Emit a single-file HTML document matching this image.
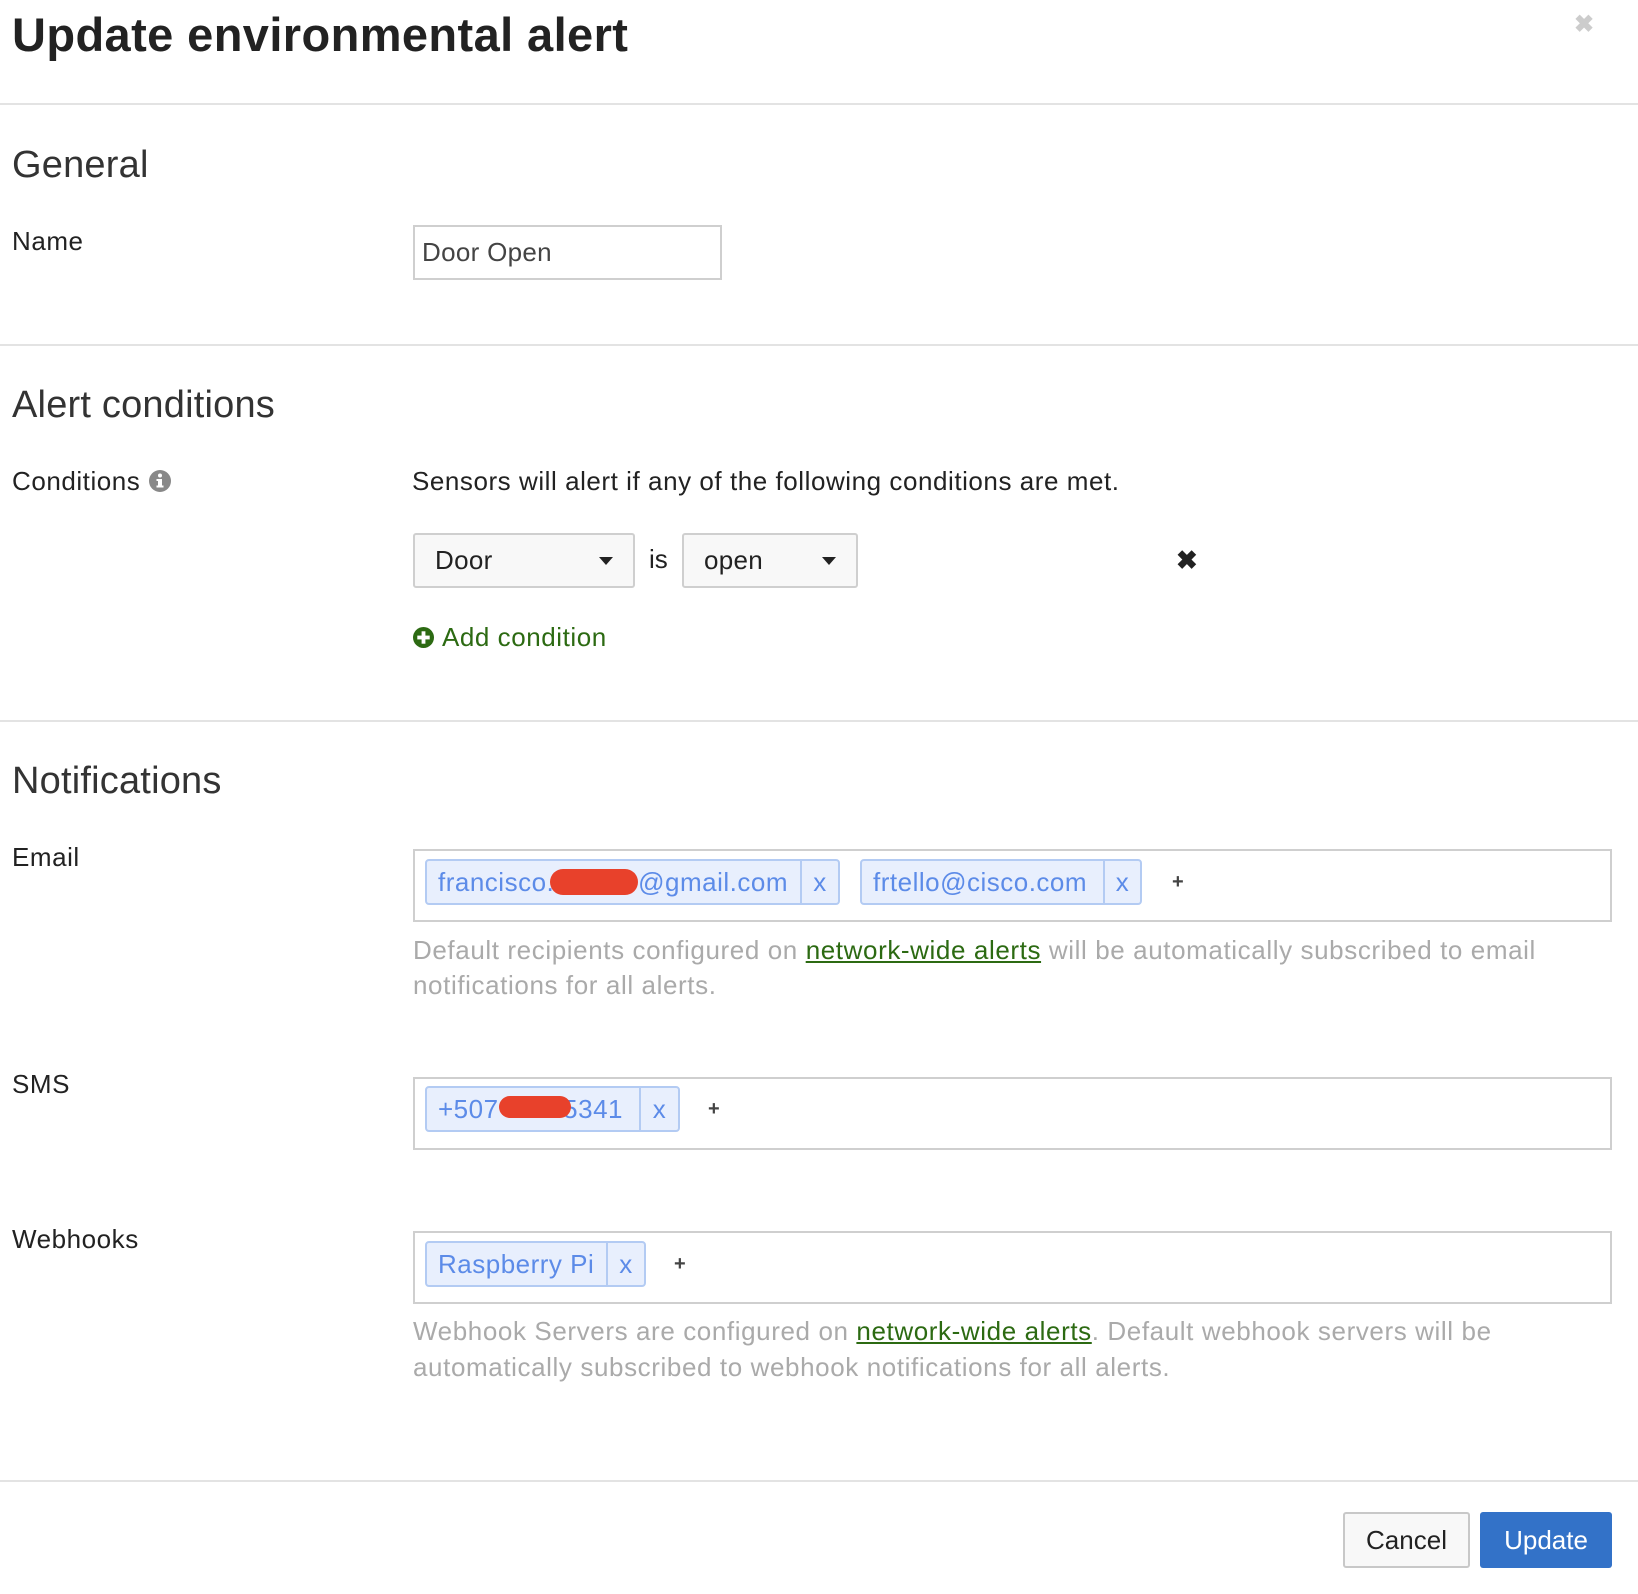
<!DOCTYPE html>
<html><head><meta charset="utf-8"><style>
*{margin:0;padding:0;box-sizing:border-box}
body{width:1638px;height:1594px;background:#fff;font-family:"Liberation Sans",Arial,sans-serif;color:#222;position:relative;overflow:hidden}
.a{position:absolute;white-space:nowrap}
.hr{position:absolute;left:0;width:1638px;height:2px;background:#e3e3e3}
.h2{font-size:38px;color:#333;line-height:44px;letter-spacing:0.2px}
.lbl{font-size:26px;line-height:30px;letter-spacing:0.55px}
.box{position:absolute;border:2px solid #cfcfcf;background:#fff}
.sel{position:absolute;border:2px solid #cfcfcf;border-radius:3px;background:#f8f8f8;font-size:26px;line-height:50px;padding-left:20px;letter-spacing:0.3px}
.sel:after{content:"";position:absolute;right:20px;top:22px;border-left:7px solid transparent;border-right:7px solid transparent;border-top:8px solid #222}
.tag{position:absolute;height:46px;border:2px solid #b3cbf3;border-radius:4px;background:#e8effd;color:#5c8be8;font-size:26px;line-height:42px;letter-spacing:0.5px}
.tag .t{position:absolute;left:11px;top:0}
.tag .x{position:absolute;top:0;bottom:0;border-left:2px solid #b3cbf3;text-align:center}
.plus{position:absolute;font-size:20px;color:#444;font-weight:bold}
.help{font-size:26px;line-height:36px;color:#aaa;letter-spacing:0.6px}
.help a{color:#2c6a12;text-decoration:underline}
.blob{position:absolute;background:#e8412b;border-radius:14px}
</style></head><body>
<div class="a" style="left:12px;top:7px;font-size:47px;font-weight:bold;line-height:56px;color:#222;letter-spacing:0.4px">Update environmental alert</div>
<div class="a" style="left:1574px;top:10px;font-size:24px;color:#ccc;font-weight:bold">✖</div>
<div class="hr" style="top:103px"></div>

<div class="a h2" style="left:12px;top:143px">General</div>
<div class="a lbl" style="left:12px;top:226px">Name</div>
<div class="box" style="left:413px;top:225px;width:309px;height:55px"></div>
<div class="a" style="left:422px;top:237px;font-size:26px;line-height:30px;color:#444;letter-spacing:0.3px">Door Open</div>
<div class="hr" style="top:344px"></div>

<div class="a h2" style="left:12px;top:383px">Alert conditions</div>
<div class="a lbl" style="left:12px;top:466px">Conditions</div>
<svg class="a" style="left:149px;top:470px" width="22" height="22" viewBox="0 0 22 22"><circle cx="11" cy="11" r="11" fill="#888"/><rect x="9" y="9" width="4" height="8" fill="#fff"/><rect x="7.5" y="15.5" width="7" height="2" fill="#fff"/><rect x="7.5" y="9" width="3" height="2" fill="#fff"/><circle cx="11" cy="5.5" r="2" fill="#fff"/></svg>
<div class="a lbl" style="left:412px;top:466px">Sensors will alert if any of the following conditions are met.</div>
<div class="sel" style="left:413px;top:533px;width:222px;height:55px">Door</div>
<div class="a" style="left:649px;top:544px;font-size:26px;line-height:30px">is</div>
<div class="sel" style="left:682px;top:533px;width:176px;height:55px">open</div>
<div class="a" style="left:1176px;top:545px;font-size:26px;font-weight:bold;color:#222">✖</div>
<svg class="a" style="left:413px;top:627px" width="21" height="21" viewBox="0 0 22 22"><circle cx="11" cy="11" r="11" fill="#2c6a12"/><rect x="9" y="4.5" width="4" height="13" fill="#fff"/><rect x="4.5" y="9" width="13" height="4" fill="#fff"/></svg>
<div class="a lbl" style="left:442px;top:622px;color:#2c6a12">Add condition</div>
<div class="hr" style="top:720px"></div>

<div class="a h2" style="left:12px;top:759px">Notifications</div>
<div class="a lbl" style="left:12px;top:842px">Email</div>
<div class="box" style="left:413px;top:849px;width:1199px;height:73px"></div>
<div class="tag" style="left:425px;top:859px;width:415px"><span class="t">francisco.</span><span class="t" style="left:auto;right:50px">@gmail.com</span><span class="x" style="left:373px;width:38px">x</span></div>
<div class="blob" style="left:550px;top:869px;width:88px;height:26px"></div>
<div class="tag" style="left:860px;top:859px;width:282px"><span class="t">frtello@cisco.com</span><span class="x" style="left:241px;width:37px">x</span></div>
<div class="plus" style="left:1172px;top:871px">+</div>
<div class="a help" style="left:413px;top:932px">Default recipients configured on <a>network-wide alerts</a> will be automatically subscribed to email</div>
<div class="a help" style="left:413px;top:967px">notifications for all alerts.</div>

<div class="a lbl" style="left:12px;top:1069px">SMS</div>
<div class="box" style="left:413px;top:1077px;width:1199px;height:73px"></div>
<div class="tag" style="left:425px;top:1086px;width:255px"><span class="t">+507</span><span class="t" style="left:auto;right:55px">5341</span><span class="x" style="left:212px;width:39px">x</span></div>
<div class="blob" style="left:499px;top:1096px;width:72px;height:22px"></div>
<div class="plus" style="left:708px;top:1098px">+</div>

<div class="a lbl" style="left:12px;top:1224px">Webhooks</div>
<div class="box" style="left:413px;top:1231px;width:1199px;height:73px"></div>
<div class="tag" style="left:425px;top:1241px;width:221px"><span class="t">Raspberry Pi</span><span class="x" style="left:179px;width:38px">x</span></div>
<div class="plus" style="left:674px;top:1253px">+</div>
<div class="a help" style="left:413px;top:1313px">Webhook Servers are configured on <a>network-wide alerts</a>. Default webhook servers will be</div>
<div class="a help" style="left:413px;top:1349px">automatically subscribed to webhook notifications for all alerts.</div>

<div class="hr" style="top:1480px"></div>
<div class="a" style="left:1343px;top:1512px;width:127px;height:56px;border:2px solid #c8c8c8;border-radius:3px;background:#f8f8f8;font-size:26px;line-height:52px;text-align:center;color:#222">Cancel</div>
<div class="a" style="left:1480px;top:1512px;width:132px;height:56px;border-radius:3px;background:#3372c8;font-size:26px;line-height:56px;text-align:center;color:#fff">Update</div>
</body></html>
